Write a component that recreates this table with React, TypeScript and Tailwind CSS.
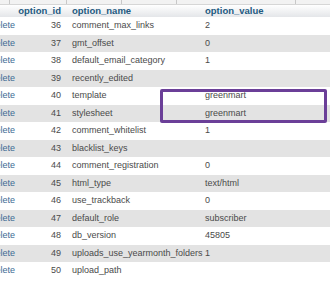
import React from 'react';

type Option = { id: number; name: string; value: string };

const options: Option[] = [
  { id: 36, name: 'comment_max_links', value: '2' },
  { id: 37, name: 'gmt_offset', value: '0' },
  { id: 38, name: 'default_email_category', value: '1' },
  { id: 39, name: 'recently_edited', value: '' },
  { id: 40, name: 'template', value: 'greenmart' },
  { id: 41, name: 'stylesheet', value: 'greenmart' },
  { id: 42, name: 'comment_whitelist', value: '1' },
  { id: 43, name: 'blacklist_keys', value: '' },
  { id: 44, name: 'comment_registration', value: '0' },
  { id: 45, name: 'html_type', value: 'text/html' },
  { id: 46, name: 'use_trackback', value: '0' },
  { id: 47, name: 'default_role', value: 'subscriber' },
  { id: 48, name: 'db_version', value: '45805' },
  { id: 49, name: 'uploads_use_yearmonth_folders', value: '1' },
  { id: 50, name: 'upload_path', value: '' },
];

const App: React.FC = () => {
  return (
    <div className="relative w-[330px] h-[288px] overflow-hidden bg-white font-['Liberation_Sans',Arial,sans-serif] text-[9px]">
      {/* strip of the row above the header */}
      <div className="flex h-[5px] bg-[#f2f2f2] border-b border-[#d6d6d6]">
        <div className="w-[10px] border-r border-[#c8c8c8]" />
        <div className="w-[57px] border-r border-[#c8c8c8]" />
        <div className="w-[55px] border-r border-[#c8c8c8]" />
        <div className="w-[55px] border-r border-[#c8c8c8]" />
        <div className="w-[119px] border-r border-[#c8c8c8]" />
        <div className="flex-1" />
      </div>

      {/* column header */}
      <div className="flex items-center h-[12px] bg-gradient-to-b from-[#ffffff] to-[#e4e6e9] font-bold text-[#235a81] text-[9.5px]">
        <div className="w-[17px]" />
        <div className="w-[44px] text-right">option_id</div>
        <div className="w-[11px]" />
        <div className="w-[133px]">option_name</div>
        <div className="flex-1">option_value</div>
      </div>

      {options.map((o, i) => (
        <div
          key={o.id}
          className={`flex items-center h-[17.5px] ${i % 2 === 0 ? 'bg-white' : 'bg-[#e3e3e3]'} text-[#4a4a4a]`}
        >
          <div className="w-[17px] overflow-hidden whitespace-nowrap text-[#3d6b94]">
            <span className="ml-[-11px]">Delete</span>
          </div>
          <div className="w-[44px] text-right">{o.id}</div>
          <div className="w-[11px]" />
          <div className="w-[133px] whitespace-nowrap">{o.name}</div>
          <div className="flex-1 whitespace-nowrap">{o.value}</div>
        </div>
      ))}

      {/* highlight around the template / stylesheet values */}
      <div className="absolute left-[160px] top-[89px] w-[167px] h-[34px] border-[3px] border-[#6b3f98] rounded-[2px]" />
    </div>
  );
};

export default App;
